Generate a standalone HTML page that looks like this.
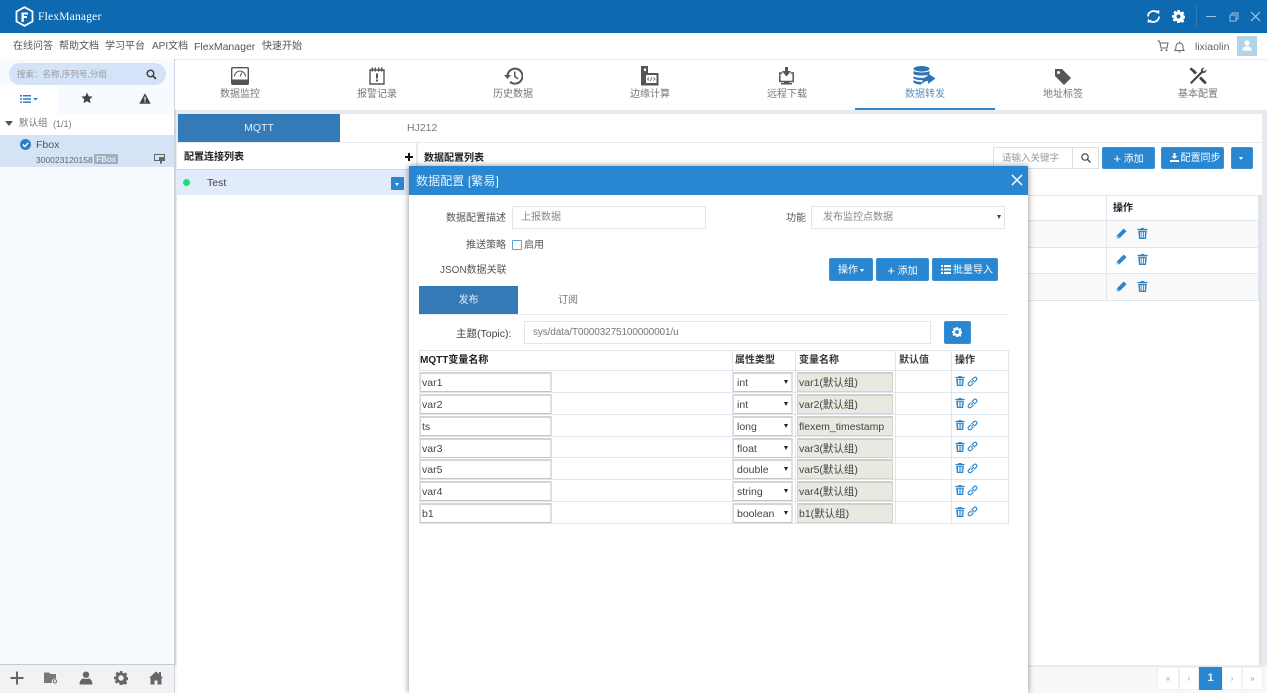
<!DOCTYPE html>
<html lang="zh">
<head>
<meta charset="utf-8">
<title>FlexManager</title>
<style>
*{box-sizing:border-box}
html,body{margin:0;padding:0}
body{width:1267px;height:693px;overflow:hidden;position:relative;background:#e6ebf1;font-family:"Liberation Sans","Noto Sans CJK SC",sans-serif;font-size:10px;color:#555}
.a{position:absolute}
.t{position:absolute;white-space:nowrap;line-height:14px}
svg{position:absolute;display:block}
.nav{position:absolute;top:60px;width:140px;height:50px}
.nav span{position:absolute;left:0;width:100%;top:28px;text-align:center;font-size:10px;line-height:14px;color:#777}
.btn{position:absolute;background:#2887d0;color:#fff;border-radius:2px;font-size:10px;line-height:23px;text-align:center;white-space:nowrap;border:1px solid #3a8fd2}
.inp{position:absolute;border:1px solid #dfe6ee;background:#fff;color:#888;font-size:10px;padding-left:8px;white-space:nowrap}
.row{position:absolute;left:419px;width:590px;height:22px;border-bottom:1px solid #dfe6f0;background:#fff}
.row .i{position:absolute;left:1px;top:1px;width:132px;height:20px;border:1px solid #cfcfcf;border-width:2px 2px 1px 1px;border-color:#d4d4d4 #e0e0e0 #c4c4c4 #d8d8d8;background:#fff;color:#444;font-size:10.5px;line-height:18px;padding-left:1px}
.row .s{position:absolute;left:314px;top:1px;width:60px;height:20px;border:1px solid #d8d8d8;border-top:2px solid #d4d4d4;border-right:2px solid #e0e0e0;border-bottom:1px solid #c4c4c4;background:#fff;color:#444;font-size:10.5px;line-height:18px;padding-left:3px}
.row .s:after{content:"";position:absolute;right:3px;top:6px;border-left:2.5px solid transparent;border-right:2.5px solid transparent;border-top:4px solid #222}
.row .d{position:absolute;left:378px;top:1px;width:96px;height:20px;border:1px solid #d2d1ca;border-top:2px solid #cfcec8;background:#e9e8e1;color:#444;font-size:10.5px;line-height:18px;padding-left:1px;white-space:nowrap}
.vl{position:absolute;width:1px;background:#dfe6f0}
.pg{position:absolute;top:667px;height:23px;background:#fff;border:1px solid #eef1f4;color:#999;font-size:8px;line-height:21px;text-align:center}
</style>
</head>
<body>
<svg width="0" height="0" style="position:absolute">
<defs>
<symbol id="trash" viewBox="0 0 12 12"><path fill="#2f84c8" d="M4.3 0h3.400l.4 1H11.500v1.400H.5V1h3.400zM1.400 3.200h9.200l-.8 8.800H2.200zM3.500 4.500l.3 6.200h1V4.500zM5.500 4.500v6.200h1V4.500zM7.500 4.500v6.200h1l.2-6.200z"/></symbol>
<symbol id="link" viewBox="1 1 10 10"><path fill="none" stroke="#2f84c8" stroke-width="1" d="M5 7 7.300 4.700M4.600 5.200 2.300 7.500a1.600 1.600 0 0 0 2.200 2.200L6.800 7.400M5.200 4.600 7.500 2.300a1.600 1.600 0 0 1 2.200 2.200L7.400 6.800"/></symbol>
<symbol id="pen" viewBox="0 0 12 12"><path fill="#2f84c8" d="M8.500 .5 11.500 3.500 4 11 .5 11.500 1 8z"/><path fill="#9cc6e8" d="M1 8 4 11 .5 11.500z"/></symbol>
</defs>
</svg>

<!-- Top bar -->
<div class="a" style="left:0;top:0;width:1267px;height:33px;background:#0d69b0"></div>
<svg style="left:15px;top:6px" width="19" height="21" viewBox="0 0 19 21"><path fill="none" stroke="#fff" stroke-width="1.800" d="M9.500 1.200 17.500 5.500V15.500L9.500 19.800 1.500 15.500V5.500z"/><path fill="#fff" d="M6.500 6.500H13V8.500H8.800V10H12V12H8.800V16H6.500z"/></svg>
<div class="t" style="left:38px;top:10px;color:#fff;font-family:'Liberation Serif','Noto Serif CJK SC',serif;font-size:11.5px;letter-spacing:.2px">FlexManager</div>
<svg style="left:1146px;top:9px" width="15" height="15" viewBox="0 0 15 15"><path fill="none" stroke="#fff" stroke-width="1.800" d="M2 7.500A5.500 5.500 0 0 1 11.500 3.800M13 7.500A5.500 5.500 0 0 1 3.500 11.200"/><path fill="#fff" d="M10 1.500 13.500 1.500 13 5.500zM5 13.500 1.500 13.500 2 9.500z"/></svg>
<svg style="left:1172px;top:10px" width="13" height="13" viewBox="0 0 13 13"><path fill="#fff" fill-rule="evenodd" d="M5.300 0h2.400l.3 1.800 1.100.5 1.500-1 1.700 1.700-1 1.500.5 1.100 1.700.3v2.400l-1.700.3-.5 1.100 1 1.500-1.700 1.700-1.500-1-1.100.5-.3 1.800H5.300L5 11.200l-1.100-.5-1.500 1-1.700-1.700 1-1.500-.5-1.100L0 7.700V5.300l1.800-.3.500-1.100-1-1.500L3 .7l1.500 1 1.100-.5zM6.500 4.500a2 2 0 1 0 0 4 2 2 0 0 0 0-4z"/></svg>
<div class="a" style="left:1196px;top:4px;width:1px;height:24px;background:#2a7cbc"></div>
<div class="a" style="left:1206px;top:16px;width:10px;height:1px;background:#9cc3e2"></div>
<svg style="left:1229px;top:12px" width="10" height="10" viewBox="0 0 10 10"><path fill="none" stroke="#9cc3e2" d="M1 3h6v6H1zM3 3V1h6v6H7"/></svg>
<svg style="left:1250px;top:11px" width="11" height="11" viewBox="0 0 11 11"><path fill="none" stroke="#b3d2ea" stroke-width="1" d="M1 1 10 10M10 1 1 10"/></svg>

<!-- Sub bar -->
<div class="a" style="left:0;top:33px;width:1267px;height:26px;background:#fff"></div>
<div class="t" style="left:13px;top:40px;font-size:10px;color:#555">在线问答</div>
<div class="t" style="left:59px;top:40px;font-size:10px;color:#555">帮助文档</div>
<div class="t" style="left:105px;top:40px;font-size:10px;color:#555">学习平台</div>
<div class="t" style="left:152px;top:40px;font-size:10px;color:#555">API文档</div>
<div class="t" style="left:194px;top:40px;font-size:10.500px;color:#555">FlexManager</div>
<div class="t" style="left:262px;top:40px;font-size:10px;color:#555">快速开始</div>
<svg style="left:1157px;top:40px" width="12" height="12" viewBox="0 0 12 12"><path fill="none" stroke="#666" d="M.5 1H2.500L4 8H10L11 3H3"/><circle cx="4.500" cy="10.300" r="1" fill="#666"/><circle cx="9.500" cy="10.300" r="1" fill="#666"/></svg>
<svg style="left:1174px;top:41px" width="11" height="12" viewBox="0 0 11 12"><path fill="none" stroke="#666" d="M1 9.500C2 8.500 2 7 2 5.500A3.500 3.500 0 0 1 9 5.500C9 7 9 8.500 10 9.500zM4.500 11H6.500M5.500 .5V2"/></svg>
<div class="t" style="left:1195px;top:40px;font-size:10.500px;color:#666">lixiaolin</div>
<div class="a" style="left:1237px;top:36px;width:20px;height:20px;background:#b0d5e6"></div>
<svg style="left:1241px;top:40px" width="12" height="11" viewBox="0 0 12 11"><circle cx="6" cy="3" r="2.600" fill="#fff"/><path fill="#fff" d="M1.500 10.500C1.500 7 3.500 6.300 6 6.300S10.500 7 10.500 10.500z"/></svg>

<!-- Sidebar -->
<div class="a" style="left:0;top:59px;width:174px;height:634px;background:#f7fbff"></div>
<div class="a" style="left:174px;top:59px;width:1.500px;height:634px;background:#d0d4d8"></div>
<div class="a" style="left:9px;top:63px;width:157px;height:22px;border-radius:11px;background:#d4e3f8"></div>
<div class="t" style="left:17px;top:67px;font-size:8.500px;color:#999">搜索：名称,序列号,分组</div>
<svg style="left:146px;top:69px" width="11" height="11" viewBox="0 0 11 11"><circle cx="4.500" cy="4.500" r="3.300" fill="none" stroke="#444" stroke-width="1.500"/><path stroke="#444" stroke-width="1.800" d="M7 7 10 10"/></svg>
<div class="a" style="left:0;top:85px;width:58px;height:29px;background:#fff"></div>
<svg style="left:20px;top:94px" width="19" height="10" viewBox="0 0 19 10"><path fill="#2f7fc4" d="M0 1h2v1.500H0zM3 1h8v1.500H3zM0 4.200h2v1.500H0zM3 4.200h8v1.500H3zM0 7.400h2v1.500H0zM3 7.400h8v1.500H3zM13 4h5l-2.500 2.500z"/></svg>
<svg style="left:81px;top:92px" width="12" height="12" viewBox="0 0 12 12"><path fill="#444" d="M6 .5 7.700 4.200 11.700 4.600 8.700 7.300 9.600 11.300 6 9.200 2.400 11.300 3.300 7.300.3 4.600 4.300 4.200z"/></svg>
<svg style="left:139px;top:93px" width="12" height="11" viewBox="0 0 12 11"><path fill="#444" fill-rule="evenodd" d="M6 .3 11.700 10.700H.3zM5.400 3.800V7.500H6.600V3.800zM5.400 8.200V9.400H6.600V8.200z"/></svg>
<div class="a" style="left:0;top:114px;width:174px;height:21px;background:#fff"></div>
<div class="a" style="left:5px;top:121px;border-left:4px solid transparent;border-right:4px solid transparent;border-top:5px solid #555"></div>
<div class="t" style="left:19px;top:117px;font-size:9.500px;color:#777">默认组</div>
<div class="t" style="left:53px;top:117px;font-size:9px;color:#777">(1/1)</div>
<div class="a" style="left:0;top:135px;width:174px;height:32px;background:#d5e3f6"></div>
<div class="a" style="left:20px;top:139px;width:11px;height:11px;border-radius:50%;background:#2f7fc4"></div>
<svg style="left:20px;top:139px" width="11" height="11" viewBox="0 0 10 10"><path fill="none" stroke="#fff" stroke-width="1.300" d="M2.500 5 4.300 6.800 7.500 3.500"/></svg>
<div class="t" style="left:36px;top:138px;font-size:10.500px;color:#555">Fbox</div>
<div class="t" style="left:36px;top:153px;font-size:8.500px;color:#666">300023120158</div>
<div class="a" style="left:94px;top:154px;width:24px;height:10px;background:#9cafc2;color:#fff;font-size:8.500px;line-height:10px;text-align:center;border-radius:1px">FBox</div>
<svg style="left:154px;top:154px" width="11" height="10" viewBox="0 0 11 10"><path fill="none" stroke="#666" d="M.5 .5H10.500V6.500H.5z"/><path fill="#666" d="M5 3H10V7H8V9.500H6V7H5z"/></svg>
<div class="a" style="left:0;top:664px;width:174px;height:1px;background:#c8c8c8"></div>
<div class="a" style="left:0;top:665px;width:174px;height:28px;background:#f1f2f4"></div>
<svg style="left:10px;top:671px" width="14" height="14" viewBox="0 0 14 14"><path fill="#666" d="M6 0.500H8V6H13.500V8H8V13.500H6V8H.5V6H6z"/></svg>
<svg style="left:44px;top:672px" width="14" height="12" viewBox="0 0 14 12"><path fill="#777" d="M0 .5H5L6.500 2H12V7A3 3 0 0 0 8 11H0z"/><circle cx="11" cy="9.300" r="1.700" fill="none" stroke="#777" stroke-width="1"/></svg>
<svg style="left:79px;top:671px" width="14" height="14" viewBox="0 0 14 14"><circle cx="7" cy="3.700" r="3.200" fill="#666"/><path fill="#666" d="M0.500 13.500C.5 9.500 3 7.800 4.500 7.300 5.500 8.300 8.500 8.300 9.500 7.300 11 7.800 13.500 9.500 13.500 13.500z"/></svg>
<svg style="left:114px;top:671px" width="14" height="14" viewBox="0 0 13 13"><path fill="#666" fill-rule="evenodd" d="M5.300 0h2.400l.3 1.800 1.100.5 1.500-1 1.700 1.700-1 1.500.5 1.100 1.700.3v2.400l-1.700.3-.5 1.100 1 1.500-1.700 1.700-1.500-1-1.100.5-.3 1.800H5.300L5 11.200l-1.100-.5-1.500 1-1.700-1.700 1-1.500-.5-1.100L0 7.700V5.300l1.800-.3.500-1.100-1-1.500L3 .7l1.500 1 1.100-.5zM6.500 4a2.500 2.500 0 1 0 0 5 2.500 2.500 0 0 0 0-5z"/></svg>
<svg style="left:149px;top:671px" width="14" height="14" viewBox="0 0 14 14"><path fill="#666" d="M7 .5 10 3V1H12V5L14 7 12.500 7V13.500H8.500V9.500H5.500V13.500H1.500V7H0z"/></svg>

<!-- Nav -->
<div class="a" style="left:175px;top:60px;width:1092px;height:50px;background:#fff"></div>
<div class="nav" style="left:170px"><span>数据监控</span></div>
<svg style="left:231px;top:67px" width="18" height="18" viewBox="0 0 18 18"><rect x=".7" y=".7" width="16.600" height="16.600" rx="1" fill="#fff" stroke="#555" stroke-width="1.400"/><rect x="1" y="12.500" width="16" height="5" fill="#555"/><path fill="none" stroke="#555" d="M3.500 9.500A5.500 5.500 0 0 1 14.500 9.500M9 9.500 11 5.500"/></svg>
<div class="nav" style="left:307px"><span>报警记录</span></div>
<svg style="left:369px;top:67px" width="16" height="18" viewBox="0 0 16 18"><path fill="none" stroke="#555" stroke-width="1.400" d="M1 3H15V17H1z"/><path fill="#555" d="M2.500 .5H4V4.500H2.500zM5.500 .5H7V4.500H5.500zM9 .5H10.500V4.500H9zM12 .5H13.500V4.500H12zM7 6.500H9V11.500H7zM7 12.500H9V14.500H7z"/></svg>
<div class="nav" style="left:443px"><span>历史数据</span></div>
<svg style="left:504px;top:67px" width="19" height="18" viewBox="0 0 19 18"><path fill="none" stroke="#555" stroke-width="2" d="M3.500 9A7.500 7.500 0 1 1 6 14.700"/><path fill="#555" d="M0 8H7L3.500 12zM10 4.500H11.500V9L14.500 11.500 13.500 12.500 10 9.800z"/></svg>
<div class="nav" style="left:580px"><span>边缘计算</span></div>
<svg style="left:641px;top:66px" width="18" height="20" viewBox="0 0 18 20"><path fill="#555" fill-rule="evenodd" d="M0 0H7V7H17.500V19.500H0zM3 2.500V5H5V2.500zM5 9V17H15.500V9z"/><path fill="none" stroke="#555" stroke-width=".8" d="M8 11.500 6.500 13 8 14.500M12.500 11.500 14 13 12.500 14.500M9.500 15 11 11"/></svg>
<div class="nav" style="left:717px"><span>远程下载</span></div>
<svg style="left:779px;top:67px" width="15" height="18" viewBox="0 0 15 18"><path fill="#555" d="M6 0H9V4H12L7.500 9.500 3 4H6z"/><path fill="none" stroke="#555" stroke-width="1.500" d="M3.500 6H.8V14.500H14.200V6H11.500"/><path fill="#555" d="M5 14.500H10V16H13V17.500H2V16H5z"/></svg>
<div class="nav" style="left:855px"><span style="color:#5d8fc4">数据转发</span></div>
<svg style="left:913px;top:66px" width="23" height="19" viewBox="0 0 23 19"><ellipse cx="8.500" cy="2.800" rx="8" ry="2.800" fill="#2f75b5"/><path fill="#2f75b5" d="M.5 4.800C2 7 15 7 16.500 4.800V8C15 10 2 10 .5 8zM.5 10C2 12 11 12.500 14 11L11 14C7 14.500 2 13.500 .5 12.500zM.5 14C2 15.500 6 16 9 16L8 18.500C5 18.500 1.500 17.500.5 16.500zM14.500 7 22.500 12.500 15 18V15C12 15 10 16.500 8.500 18.500 9.500 13.500 11.500 10.500 14.500 10.300z"/></svg>
<div class="a" style="left:855px;top:108px;width:140px;height:2px;background:#2f87cf"></div>
<div class="nav" style="left:993px"><span>地址标签</span></div>
<svg style="left:1054px;top:68px" width="18" height="18" viewBox="0 0 18 18"><path fill="#555" fill-rule="evenodd" d="M1 1H8L17 10 10 17 1 8zM4.500 3A1.500 1.500 0 1 0 4.500 6 1.500 1.500 0 0 0 4.500 3z"/></svg>
<div class="nav" style="left:1128px"><span>基本配置</span></div>
<svg style="left:1189px;top:67px" width="18" height="18" viewBox="0 0 18 18"><path fill="#444" d="M1 15.500 12 4.500C11.500 2.500 13 .5 15.500.5L13.500 3 15 4.500 17.500 2.500C17.500 5 15.500 6.500 13.500 6L2.500 17z"/><path fill="#444" d="M.5 2 2 .5 5 2.500 8 5.500 6 7.500 3 4.500z"/><path fill="#444" d="M10 11.500 12 9.500 17 14.500A1.400 1.400 0 0 1 15 16.500z"/></svg>

<!-- Tabs -->
<div class="a" style="left:178px;top:114px;width:1084px;height:28px;background:#fff"></div>
<div class="a" style="left:178px;top:114px;width:162px;height:28px;background:#337ab7;color:#e6f0f8;text-align:center;line-height:28px;font-size:10.500px">MQTT</div>
<div class="t" style="left:407px;top:121px;font-size:10.500px;color:#777">HJ212</div>

<!-- Left panel -->
<div class="a" style="left:177px;top:143px;width:239px;height:522px;background:#fff"></div>
<div class="a" style="left:177px;top:169px;width:239px;height:1px;background:#d4d8dd"></div>
<div class="t" style="left:184px;top:151px;font-size:10px;font-weight:bold;color:#222">配置连接列表</div>
<svg style="left:405px;top:153px" width="8" height="8" viewBox="0 0 8 8"><path fill="#111" d="M3 0H5V3H8V5H5V8H3V5H0V3H3z"/></svg>
<div class="a" style="left:177px;top:170px;width:239px;height:25px;background:#e1ebfb"></div>
<div class="a" style="left:183px;top:179px;width:7px;height:7px;border-radius:50%;background:#1fdc74"></div>
<div class="t" style="left:207px;top:176px;font-size:10.500px;color:#444">Test</div>
<div class="a" style="left:391px;top:177px;width:13px;height:13px;background:#2887d0;border-radius:1px"></div>
<div class="a" style="left:395px;top:183px;border-left:2.500px solid transparent;border-right:2.500px solid transparent;border-top:3px solid #fff"></div>

<!-- Right panel -->
<div class="a" style="left:418px;top:143px;width:844px;height:522px;background:#fff"></div>
<div class="t" style="left:424px;top:152px;font-size:10px;font-weight:bold;color:#222">数据配置列表</div>
<div class="a" style="left:993px;top:147px;width:80px;height:22px;border:1px solid #dde1e6;background:#fff;color:#999;font-size:9.500px;line-height:21px;padding-left:8px">请输入关键字</div>
<div class="a" style="left:1072px;top:147px;width:27px;height:22px;border:1px solid #dde1e6;background:#fff"></div>
<svg style="left:1081px;top:153px" width="10" height="10" viewBox="0 0 10 10"><circle cx="4" cy="4" r="3.200" fill="none" stroke="#444" stroke-width="1.200"/><path stroke="#444" stroke-width="1.400" d="M6.500 6.500 9.500 9.500"/></svg>
<div class="btn" style="left:1102px;top:147px;width:53px;height:22px;line-height:21px;font-size:10px"><span style="font-size:13px;vertical-align:-1px">+</span> 添加</div>
<div class="btn" style="left:1161px;top:147px;width:63px;height:22px;line-height:21px;font-size:10px;padding-left:16px">配置同步</div>
<svg style="left:1170px;top:153px" width="9" height="9" viewBox="0 0 9 9"><path fill="#fff" d="M3.500 0H5.500V3H7.500L4.500 6 1.500 3H3.500zM0 7H9V9H0z"/></svg>
<div class="btn" style="left:1231px;top:147px;width:22px;height:22px"></div>
<div class="a" style="left:1239px;top:157px;border-left:2.500px solid transparent;border-right:2.500px solid transparent;border-top:3px solid #fff"></div>

<!-- Background table -->
<div class="a" style="left:1028px;top:195px;width:231px;height:106px;border:1px solid #dfe6f0;border-left:0;background:#fff"></div>
<div class="a" style="left:1028px;top:221px;width:230px;height:26px;background:#f9f9f9"></div>
<div class="a" style="left:1028px;top:273px;width:230px;height:26px;background:#f9f9f9"></div>
<div class="a" style="left:1028px;top:220px;width:230px;height:1px;background:#dfe6f0"></div>
<div class="a" style="left:1028px;top:247px;width:230px;height:1px;background:#dfe6f0"></div>
<div class="a" style="left:1028px;top:273px;width:230px;height:1px;background:#dfe6f0"></div>
<div class="vl" style="left:1106px;top:195px;height:105px"></div>
<div class="t" style="left:1113px;top:202px;font-size:10px;font-weight:bold;color:#222">操作</div>
<svg style="left:1116px;top:228px" width="11" height="11"><use href="#pen"/></svg>
<svg style="left:1137px;top:228px" width="11" height="11"><use href="#trash"/></svg>
<svg style="left:1116px;top:254px" width="11" height="11"><use href="#pen"/></svg>
<svg style="left:1137px;top:254px" width="11" height="11"><use href="#trash"/></svg>
<svg style="left:1116px;top:281px" width="11" height="11"><use href="#pen"/></svg>
<svg style="left:1137px;top:281px" width="11" height="11"><use href="#trash"/></svg>
<div class="a" style="left:1259px;top:195px;width:3px;height:470px;background:#e2e2e2"></div>

<!-- Footer pagination -->
<div class="a" style="left:175px;top:665px;width:1092px;height:28px;background:#f6f8fa"></div>
<div class="a" style="left:175px;top:665px;width:1092px;height:2px;background:#e8ecf0"></div>
<div class="a" style="left:177px;top:665px;width:232px;height:28px;background:#fff"></div>
<div class="pg" style="left:1157px;width:22px">«</div>
<div class="pg" style="left:1179px;width:20px">‹</div>
<div class="pg" style="left:1199px;width:23px;background:#2887d0;border-color:#2887d0;color:#e8f2fa;font-size:11px;font-weight:bold">1</div>
<div class="pg" style="left:1222px;width:20px">›</div>
<div class="pg" style="left:1242px;width:21px">»</div>

<!-- Modal -->
<div class="a" style="left:409px;top:166px;width:619px;height:527px;background:#fff;box-shadow:0 0 6px rgba(0,0,0,.45)"></div>
<div class="a" style="left:409px;top:166px;width:619px;height:29px;background:#2887d0"></div>
<div class="t" style="left:416px;top:174px;font-size:12px;color:#eaf3fa;letter-spacing:.1px">数据配置 [繁易]</div>
<svg style="left:1011px;top:174px" width="12" height="12" viewBox="0 0 12 12"><path stroke="#fff" stroke-width="1.500" d="M1 1 11 11M11 1 1 11"/></svg>

<div class="t" style="left:446px;top:212px;font-size:10px;color:#555">数据配置描述</div>
<div class="inp" style="left:512px;top:206px;width:194px;height:23px;line-height:22px">上报数据</div>
<div class="t" style="left:786px;top:212px;font-size:10px;color:#555">功能</div>
<div class="inp" style="left:811px;top:206px;width:194px;height:23px;line-height:22px;padding-left:11px">发布监控点数据</div>
<div class="a" style="left:997px;top:215px;border-left:2.500px solid transparent;border-right:2.500px solid transparent;border-top:4px solid #444"></div>
<div class="t" style="left:466px;top:239px;font-size:10px;color:#555">推送策略</div>
<div class="a" style="left:512px;top:240px;width:10px;height:10px;border:1px solid #5aa3dc;border-radius:1px;background:#fff"></div>
<div class="t" style="left:524px;top:239px;font-size:10px;color:#555">启用</div>
<div class="t" style="left:440px;top:264px;font-size:10px;color:#555">JSON数据关联</div>
<div class="btn" style="left:829px;top:258px;width:44px;height:23px;line-height:23px;padding-right:6px">操作</div>
<div class="a" style="left:860px;top:269px;border-left:2.500px solid transparent;border-right:2.500px solid transparent;border-top:3px solid #fff"></div>
<div class="btn" style="left:876px;top:258px;width:53px;height:23px;line-height:23px"><span style="font-size:13px;vertical-align:-1px">+</span> 添加</div>
<div class="btn" style="left:932px;top:258px;width:66px;height:23px;line-height:23px;padding-left:16px">批量导入</div>
<svg style="left:941px;top:265px" width="10" height="9" viewBox="0 0 10 9"><path fill="#fff" d="M0 0H2V2H0zM3 0H10V2H3zM0 3.500H2V5.500H0zM3 3.500H10V5.500H3zM0 7H2V9H0zM3 7H10V9H3z"/></svg>

<div class="a" style="left:419px;top:286px;width:99px;height:28px;background:#337ab7;color:#e6f0f8;text-align:center;line-height:29px;font-size:10px">发布</div>
<div class="t" style="left:558px;top:294px;font-size:10px;color:#777">订阅</div>
<div class="a" style="left:419px;top:314px;width:589px;height:1px;background:#e6ebf0"></div>
<div class="t" style="left:456px;top:327px;font-size:10.500px;color:#444">主题(Topic):</div>
<div class="inp" style="left:524px;top:321px;width:407px;height:23px;line-height:22px;padding-left:8px;font-size:10px;letter-spacing:-.12px;color:#777">sys/data/T00003275100000001/u</div>
<div class="btn" style="left:944px;top:321px;width:27px;height:23px"></div>
<svg style="left:952px;top:327px" width="10" height="10" viewBox="0 0 13 13"><path fill="#fff" fill-rule="evenodd" d="M5.300 0h2.400l.3 1.800 1.100.5 1.500-1 1.700 1.700-1 1.500.5 1.100 1.700.3v2.400l-1.700.3-.5 1.100 1 1.500-1.700 1.700-1.500-1-1.100.5-.3 1.800H5.300L5 11.200l-1.100-.5-1.500 1-1.700-1.700 1-1.500-.5-1.100L0 7.700V5.300l1.800-.3.500-1.100-1-1.500L3 .7l1.500 1 1.100-.5zM6.500 4a2.500 2.500 0 1 0 0 5 2.500 2.500 0 0 0 0-5z"/></svg>

<!-- Table -->
<div class="a" style="left:419px;top:350px;width:590px;height:1px;background:#dfe6f0"></div>
<div class="a" style="left:419px;top:370px;width:590px;height:1px;background:#dfe6f0"></div>
<div class="t" style="left:420px;top:354px;font-size:10px;font-weight:bold;color:#222">MQTT变量名称</div>
<div class="t" style="left:735px;top:354px;font-size:10px;font-weight:bold;color:#333">属性类型</div>
<div class="t" style="left:799px;top:354px;font-size:10px;font-weight:bold;color:#333">变量名称</div>
<div class="t" style="left:899px;top:354px;font-size:10px;font-weight:bold;color:#444">默认值</div>
<div class="t" style="left:955px;top:354px;font-size:10px;font-weight:bold;color:#333">操作</div>

<div class="row" style="top:371px"><div class="i">var1</div><div class="s">int</div><div class="d">var1(默认组)</div></div>
<div class="row" style="top:393px"><div class="i">var2</div><div class="s">int</div><div class="d">var2(默认组)</div></div>
<div class="row" style="top:415px"><div class="i">ts</div><div class="s">long</div><div class="d">flexem_timestamp</div></div>
<div class="row" style="top:437px;height:21px"><div class="i">var3</div><div class="s">float</div><div class="d">var3(默认组)</div></div>
<div class="row" style="top:458px"><div class="i">var5</div><div class="s">double</div><div class="d">var5(默认组)</div></div>
<div class="row" style="top:480px"><div class="i">var4</div><div class="s">string</div><div class="d">var4(默认组)</div></div>
<div class="row" style="top:502px"><div class="i">b1</div><div class="s">boolean</div><div class="d">b1(默认组)</div></div>

<div class="vl" style="left:732px;top:351px;height:172px"></div>
<div class="vl" style="left:795px;top:351px;height:172px"></div>
<div class="vl" style="left:895px;top:351px;height:172px"></div>
<div class="vl" style="left:951px;top:351px;height:172px"></div>
<div class="vl" style="left:1008px;top:351px;height:172px"></div>
<div class="vl" style="left:419px;top:351px;height:172px"></div>

<svg style="left:955px;top:376px" width="10" height="10"><use href="#trash"/></svg><svg style="left:967px;top:376px" width="11" height="11"><use href="#link"/></svg>
<svg style="left:955px;top:398px" width="10" height="10"><use href="#trash"/></svg><svg style="left:967px;top:398px" width="11" height="11"><use href="#link"/></svg>
<svg style="left:955px;top:420px" width="10" height="10"><use href="#trash"/></svg><svg style="left:967px;top:420px" width="11" height="11"><use href="#link"/></svg>
<svg style="left:955px;top:442px" width="10" height="10"><use href="#trash"/></svg><svg style="left:967px;top:441px" width="11" height="11"><use href="#link"/></svg>
<svg style="left:955px;top:463px" width="10" height="10"><use href="#trash"/></svg><svg style="left:967px;top:463px" width="11" height="11"><use href="#link"/></svg>
<svg style="left:955px;top:485px" width="10" height="10"><use href="#trash"/></svg><svg style="left:967px;top:485px" width="11" height="11"><use href="#link"/></svg>
<svg style="left:955px;top:507px" width="10" height="10"><use href="#trash"/></svg><svg style="left:967px;top:506px" width="11" height="11"><use href="#link"/></svg>
</body>
</html>
